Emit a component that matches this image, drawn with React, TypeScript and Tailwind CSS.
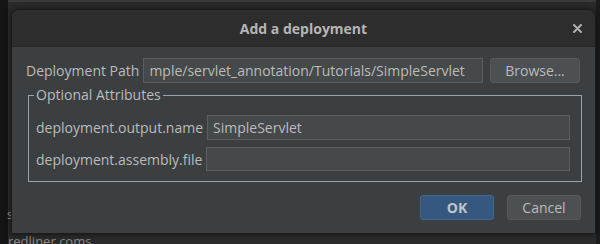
import React from "react";

export default function App() {
  const font = { fontFamily: '"Open Sans", "Noto Sans", sans-serif' };
  return (
    <div
      className="relative w-[600px] h-[244px] overflow-hidden bg-[#2b2b2b] text-[#bbbbbb]"
      style={font}
    >
      {/* background window content */}
      <div className="absolute left-0 top-0 w-[8px] h-full bg-[#141414]" />
      <div className="absolute left-[8px] top-0 w-[592px] h-[2px] bg-[#3a3a3a]" />
      <div className="absolute right-0 top-0 w-[4px] h-full bg-[#1c1c1c]" />
      <div className="absolute left-[7px] top-[208px] text-[13px] leading-none text-[#9a9a9a]">s</div>
      <div className="absolute left-[8px] top-[235px] text-[13px] leading-none text-[#8a8a8a]">
        redliner.coms
      </div>

      {/* dialog */}
      <div className="absolute left-[11px] top-[9px] w-[585px] h-[225px] flex flex-col rounded-t-[8px] overflow-hidden border border-[#1b1b1b] shadow-[0_0_6px_rgba(0,0,0,0.6)]">
        <div className="h-[37px] shrink-0 bg-[#2d2d2d] flex items-center justify-center relative border-b border-[#262626]">
          <span className="text-[14px] font-bold text-[#b5b5b5]">Add a deployment</span>
          <svg
            className="absolute right-[13px] top-[14px]"
            width="9"
            height="9"
            viewBox="0 0 9 9"
          >
            <path d="M1 1 L8 8 M8 1 L1 8" stroke="#b0b0b0" strokeWidth="2" strokeLinecap="round" />
          </svg>
        </div>
        <div className="flex-1 bg-[#3c3f41] flex flex-col pt-[11px] pl-[14px] pr-[15px] text-[14px]">
          <div className="flex items-center h-[25px]">
            <span className="whitespace-nowrap">Deployment Path</span>
            <div className="ml-[4px] flex-1 min-w-0 h-[25px] bg-[#45494a] border border-[#5b5e60] flex items-center overflow-hidden px-[5px]">
              <span className="whitespace-nowrap">mple/servlet_annotation/Tutorials/SimpleServlet</span>
            </div>
            <button className="ml-[7px] w-[90px] h-[25px] shrink-0 rounded-[3px] bg-[#4c5052] border border-[#565a5c] text-[#bbbbbb]">
              Browse...
            </button>
          </div>

          <fieldset className="mt-[4px] ml-[2px] mr-[-2px] border border-[#97a4ae] pl-[7px] pr-[11px] pb-[10px] pt-[12px] min-w-0">
            <legend className="ml-[-2px] px-[2px] leading-[16px]">Optional Attributes</legend>
            <div className="flex flex-col gap-[7px]">
              <div className="flex items-center h-[25px]">
                <span className="whitespace-nowrap">deployment.output.name</span>
                <div className="ml-[4px] flex-1 h-[25px] bg-[#45494a] border border-[#5b5e60] flex items-center px-[5px]">
                  <span className="whitespace-nowrap">SimpleServlet</span>
                </div>
              </div>
              <div className="flex items-center h-[24px]">
                <span className="whitespace-nowrap">deployment.assembly.file</span>
                <div className="ml-[4px] flex-1 h-[24px] bg-[#45494a] border border-[#5b5e60]" />
              </div>
            </div>
          </fieldset>

          <div className="flex justify-end gap-[13px] mt-[13px] mr-[-1px]">
            <button className="w-[74px] h-[25px] rounded-[3px] bg-[#365880] border border-[#43688f] font-bold text-[#c0c6cc]">
              OK
            </button>
            <button className="w-[74px] h-[25px] rounded-[3px] bg-[#4c5052] border border-[#565a5c] text-[#bbbbbb]">
              Cancel
            </button>
          </div>
        </div>
      </div>
    </div>
  );
}
